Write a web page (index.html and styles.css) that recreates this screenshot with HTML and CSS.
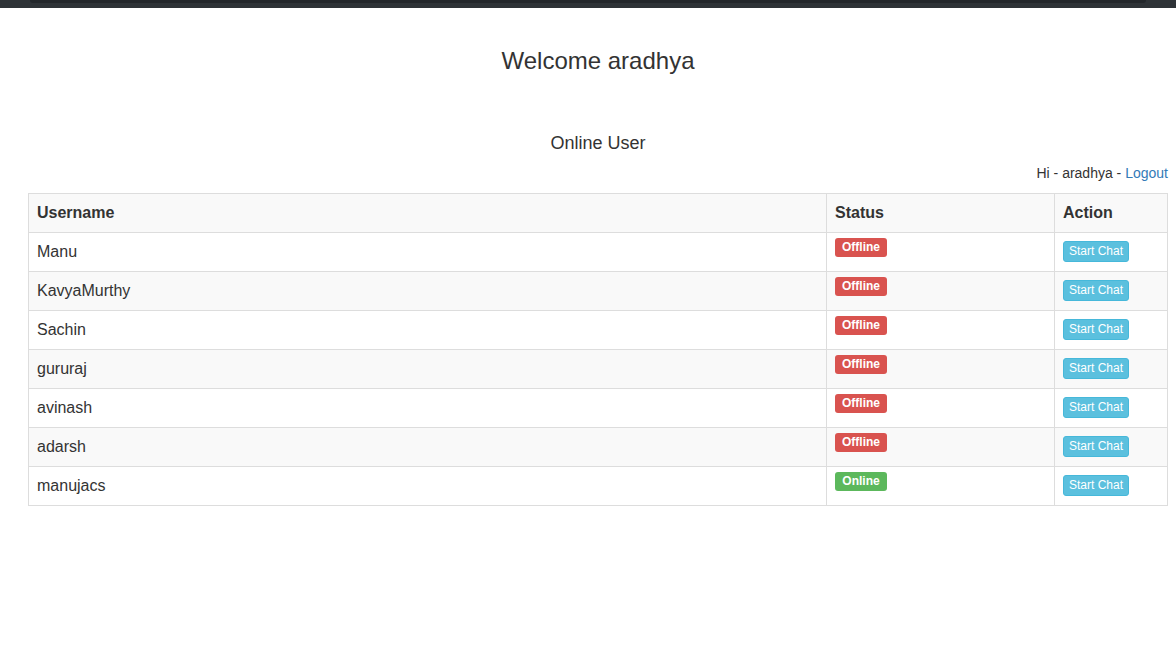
FILE: index.html
```html
<!DOCTYPE html>
<html>
<head>
<meta charset="utf-8">
<title>Chat</title>
<link rel="stylesheet" href="styles.css">
</head>
<body>
<div class="topbar"><div class="topbar-inner"></div></div>
<main class="page">
  <h1 class="welcome">Welcome aradhya</h1>
  <h2 class="subtitle">Online User</h2>
  <div class="userline">Hi - aradhya - <a href="#" class="link">Logout</a></div>
  <table class="users">
    <tr><th class="c-name">Username</th><th class="c-status">Status</th><th class="c-action">Action</th></tr>
    <tr><td>Manu</td><td><span class="label off">Offline</span></td><td><button class="btn">Start Chat</button></td></tr>
    <tr><td>KavyaMurthy</td><td><span class="label off">Offline</span></td><td><button class="btn">Start Chat</button></td></tr>
    <tr><td>Sachin</td><td><span class="label off">Offline</span></td><td><button class="btn">Start Chat</button></td></tr>
    <tr><td>gururaj</td><td><span class="label off">Offline</span></td><td><button class="btn">Start Chat</button></td></tr>
    <tr><td>avinash</td><td><span class="label off">Offline</span></td><td><button class="btn">Start Chat</button></td></tr>
    <tr><td>adarsh</td><td><span class="label off">Offline</span></td><td><button class="btn">Start Chat</button></td></tr>
    <tr><td>manujacs</td><td><span class="label on">Online</span></td><td><button class="btn">Start Chat</button></td></tr>
  </table>
</main>
</body>
</html>
```
FILE: styles.css
```css
* { box-sizing: border-box; }
html, body { margin: 0; padding: 0; background: #fff; }
body {
  font-family: "Liberation Sans", Arial, sans-serif;
  color: #333;
  font-size: 14px;
  line-height: 1.42857;
}
.topbar {
  height: 8px;
  background: #2e3337;
  padding: 0 30px;
}
.topbar-inner {
  height: 3px;
  background: #23272b;
  border-radius: 0 0 4px 4px;
}
.page {
  padding: 0 8px 0 28px;
}
.welcome {
  margin: 40px 0 0;
  font-size: 24px;
  font-weight: 500;
  line-height: 26px;
  text-align: center;
}
.subtitle {
  margin: 59px 0 0;
  font-size: 18px;
  font-weight: 500;
  line-height: 20px;
  text-align: center;
}
.userline {
  margin-top: 10px;
  text-align: right;
  line-height: 20px;
}
.link { color: #337ab7; text-decoration: none; }
.users {
  margin-top: 10px;
  width: 100%;
  border-collapse: collapse;
  font-size: 16px;
}
.users th, .users td {
  border: 1px solid #ddd;
  padding: 8px;
  height: 39px;
  line-height: 22px;
  text-align: left;
  vertical-align: top;
}
.users tr:nth-child(odd) { background: #f9f9f9; }
.c-name { width: 798px; }
.c-status { width: 228px; }
.label {
  display: inline-block;
  min-width: 52px;
  height: 19px;
  padding: 2px 7px 3px;
  font-size: 12px;
  font-weight: bold;
  line-height: 14px;
  text-align: center;
  color: #fff;
  border-radius: 3px;
  vertical-align: top;
  position: relative;
  top: -3px;
}
.off { background: #d9534f; }
.on { background: #5cb85c; }
.btn {
  font-family: inherit;
  display: inline-block;
  height: 21px;
  font-size: 12px;
  line-height: 17px;
  padding: 1px 5px;
  color: #fff;
  background: #5bc0de;
  border: 1px solid #46b8da;
  border-radius: 3px;
  vertical-align: top;
  cursor: pointer;
}
```
